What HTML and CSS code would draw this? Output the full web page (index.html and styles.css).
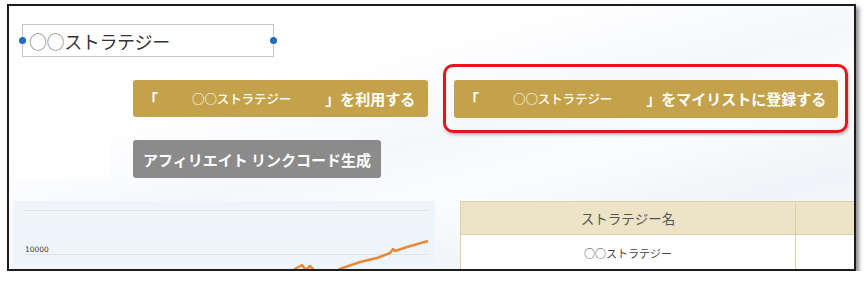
FILE: index.html
```html
<!DOCTYPE html>
<html lang="ja">
<head>
<meta charset="utf-8">
<link rel="stylesheet" href="styles.css">
</head>
<body>
<div class="frame">
  <div class="canvas">
    <div class="title-box">
      <span class="title-text"><span class="circ">○○</span>ストラテジー</span>
      <span class="handle handle-left"></span>
      <span class="handle handle-right"></span>
    </div>

    <div class="actions">
      <div class="ghost-panel"></div>
      <div class="action-row">
        <div class="btn btn-gold btn-use">
          <span class="br">「</span><span class="name">○○ストラテジー</span><span class="br">」</span><span class="label">を利用する</span>
        </div>
        <div class="highlight">
          <div class="btn btn-gold btn-list">
            <span class="br">「</span><span class="name">○○ストラテジー</span><span class="br">」</span><span class="label">をマイリストに登録する</span>
          </div>
        </div>
      </div>
      <div class="btn btn-gray">アフィリエイト リンクコード生成</div>
    </div>

    <div class="bottom">
      <div class="chart">
        <svg width="422" height="80" viewBox="0 0 422 80">
          <line x1="10" y1="9.5" x2="415" y2="9.5" class="grid"/>
          <line x1="10" y1="53.5" x2="415" y2="53.5" class="grid"/>
          <text x="12" y="51" class="axis">10000</text>
          <polyline class="series" points="268,78 282,68 289,64 292,68 294,68 297,65 300,68 305,72 320,72 327,68 347,61 364,57 377,52 380,48 382,50 394,46 415,40"/>
        </svg>
      </div>
      <table class="strat-table">
        <thead>
          <tr><th class="c1">ストラテジー名</th><th class="c2"></th></tr>
        </thead>
        <tbody>
          <tr><td class="c1">○○ストラテジー</td><td class="c2"></td></tr>
        </tbody>
      </table>
    </div>
  </div>
</div>
</body>
</html>
```

FILE: styles.css
```css
html, body {
  margin: 0;
  padding: 0;
  background: #ffffff;
}

body {
  font-family: "Noto Sans CJK JP", "Noto Sans", sans-serif;
}

.frame {
  margin: 4px 0 0 7px;
  width: 845px;
  height: 263px;
  border: 2px solid #1c1c1c;
  box-shadow: 3px 3px 4px rgba(0, 0, 0, 0.45);
  overflow: hidden;
}

.canvas {
  height: 100%;
  background:
    linear-gradient(165deg, #ffffff 0%, #ffffff 30%, #f5f7fb 50%, #fbfcfd 62%, #f0f4f8 80%, #ffffff 100%);
  display: flex;
  flex-direction: column;
  align-items: flex-start;
}

.canvas > * {
  flex-shrink: 0;
}

.title-box {
  position: relative;
  box-sizing: border-box;
  margin: 18px 0 0 13px;
  width: 252px;
  height: 33px;
  border: 1px solid #c6c6c6;
  background: #ffffff;
  display: flex;
  align-items: center;
  padding-left: 6px;
}

.title-text {
  font-size: 18px;
  color: #333333;
  line-height: 1;
  letter-spacing: -0.4px;
}

.title-text .circ {
  color: #8a8a8a;
}

.handle {
  position: absolute;
  top: 50%;
  width: 7px;
  height: 7px;
  margin-top: -3.5px;
  border-radius: 50%;
  background: #1f6cc4;
}

.handle-left { left: -4px; }
.handle-right { right: -4px; }

.actions {
  margin-top: 7px;
  display: grid;
  grid-template-columns: 95px auto;
  grid-template-rows: 69px 38px;
  row-gap: 7px;
  column-gap: 23px;
  margin-left: 6px;
}

.ghost-panel {
  grid-row: 1 / 3;
  grid-column: 1;
  margin-top: 23px;
  background: rgba(255, 255, 255, 0.8);
}

.action-row {
  grid-column: 2;
  grid-row: 1;
  display: flex;
  align-items: center;
  gap: 15px;
}

.btn {
  box-sizing: border-box;
  border-radius: 3px;
  color: #ffffff;
  display: flex;
  align-items: center;
  white-space: nowrap;
}

.btn-gold {
  background: #c4a24b;
  padding: 0 12px 0 10px;
  font-size: 15px;
  font-weight: 700;
}

.btn-use {
  width: 295px;
  height: 37px;
}

.btn-list {
  width: 384px;
  height: 38px;
}

.btn .br {
  font-weight: 700;
}

.btn .name {
  font-size: 12.5px;
  font-weight: 500;
  margin: 0 34px;
  letter-spacing: -0.1px;
}

.highlight {
  box-sizing: border-box;
  width: 405px;
  height: 69px;
  border: 3px solid #e5141d;
  border-radius: 10px;
  padding: 0 7px 0 8px;
  display: flex;
  align-items: center;
  box-shadow: 1px 2px 3px rgba(0, 0, 0, 0.25);
}

.btn-gray {
  grid-column: 2;
  grid-row: 2;
  width: 248px;
  height: 38px;
  background: #8b8b8b;
  font-size: 15px;
  font-weight: 700;
  padding-left: 10px;
}

.bottom {
  margin: 23px 0 0 4px;
  display: flex;
  align-items: flex-start;
  gap: 25px;
}

.chart {
  width: 422px;
  height: 80px;
  background: #eef5fa;
}

.chart svg { display: block; }

.grid {
  stroke: #dde5eb;
  stroke-width: 1;
}

.axis {
  font-family: "DejaVu Sans", sans-serif;
  font-size: 7.5px;
  fill: #3a3a44;
}

.series {
  fill: none;
  stroke: #e8893a;
  stroke-width: 2.5;
  stroke-linejoin: round;
}

.strat-table {
  border-collapse: collapse;
  table-layout: fixed;
  width: 480px;
  flex-shrink: 0;
}

.strat-table th,
.strat-table td {
  border: 1px solid #ddd0a6;
  text-align: center;
  padding: 0;
}

.strat-table .c1 { width: 334px; }
.strat-table .c2 { width: 146px; }

.strat-table th {
  height: 32px;
  background: #ede3c7;
  font-size: 13.5px;
  font-weight: 400;
  color: #555555;
}

.strat-table td {
  height: 36px;
  background: #ffffff;
  font-size: 11px;
  color: #444444;
}
```
